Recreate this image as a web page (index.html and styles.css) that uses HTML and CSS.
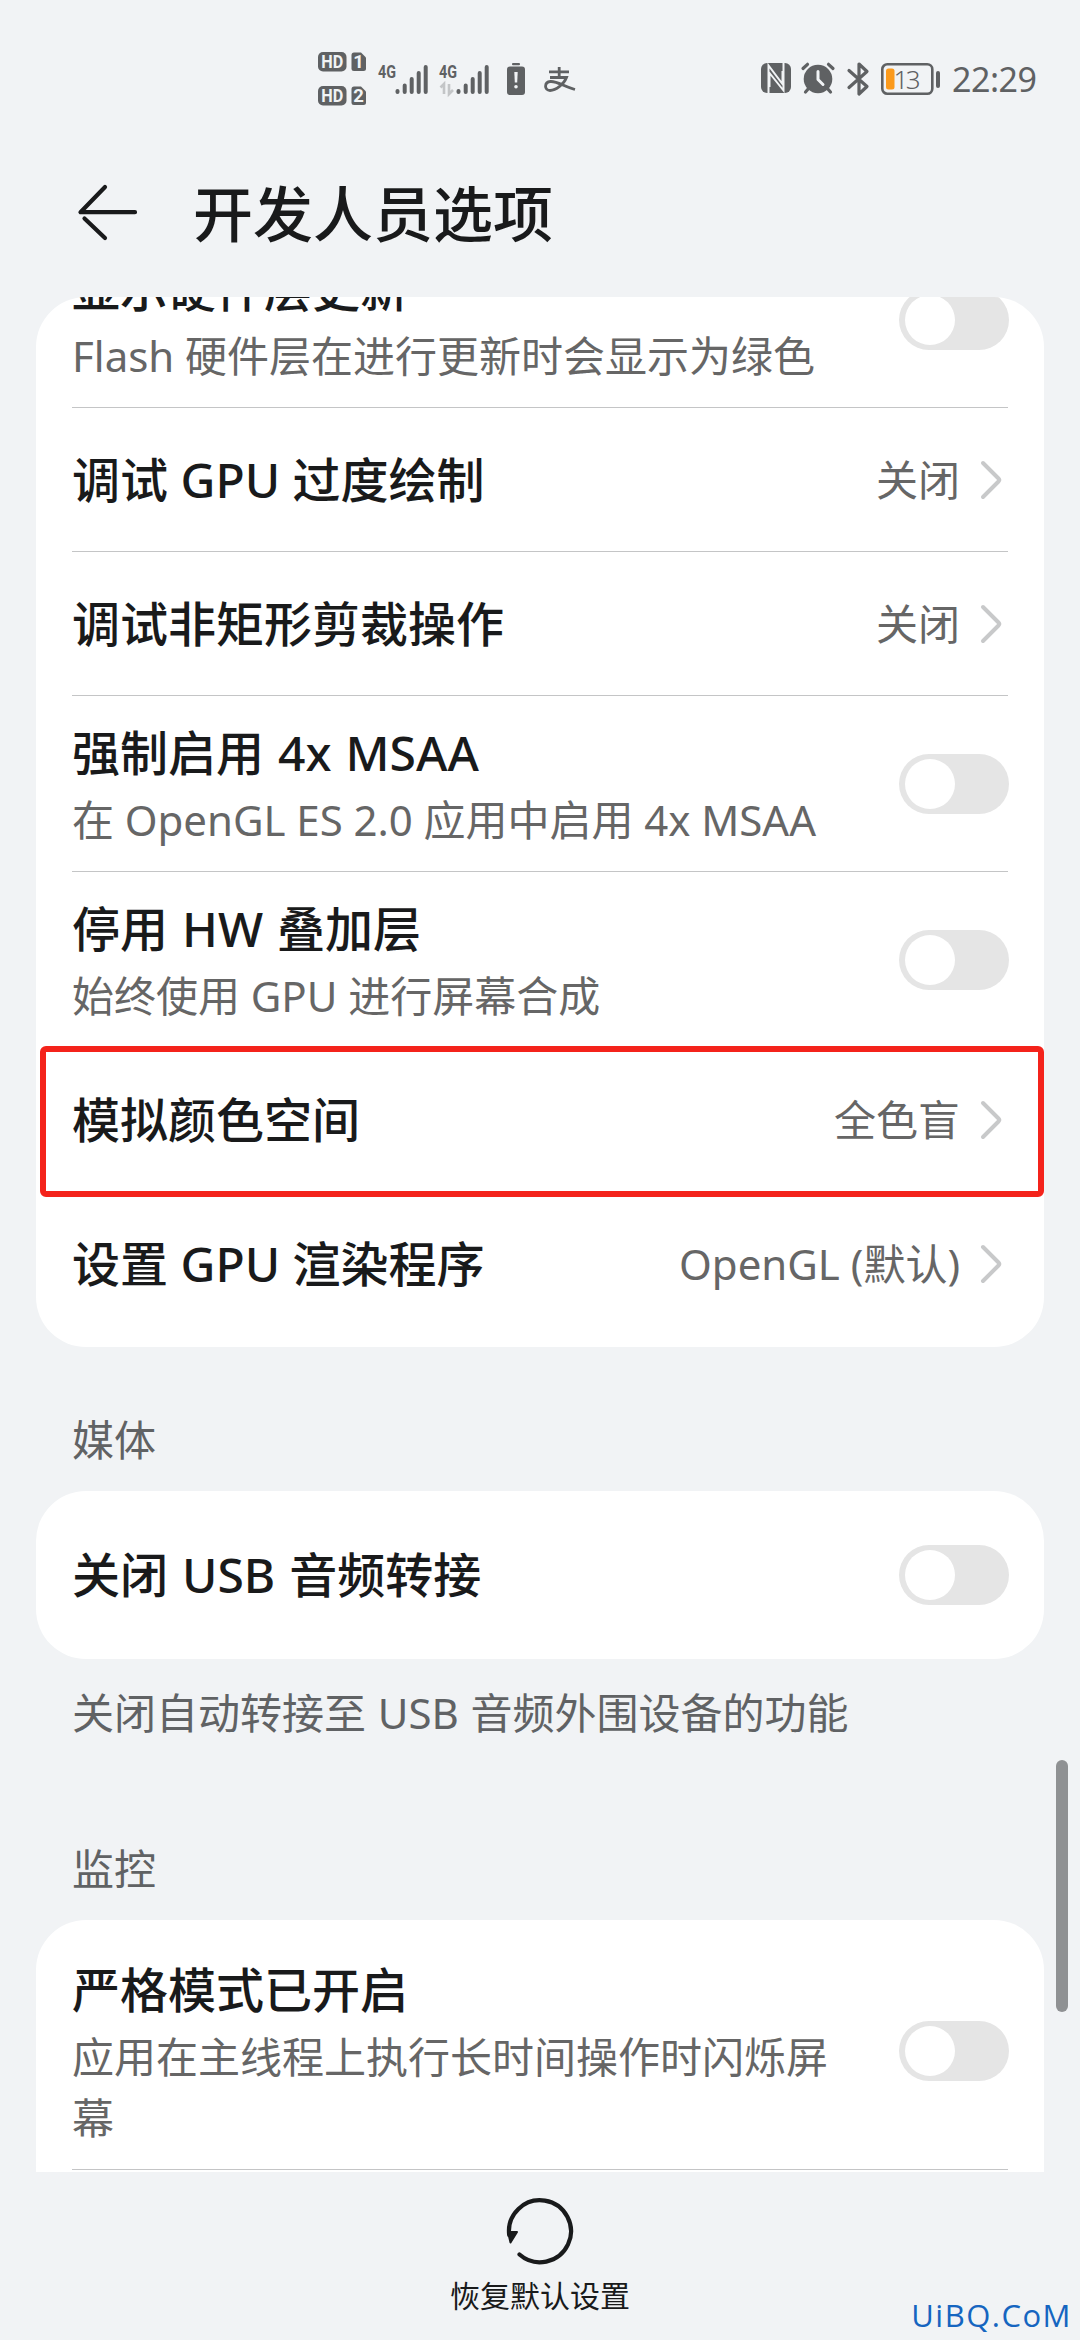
FILE: index.html
```html
<!DOCTYPE html>
<html lang="zh-CN">
<head>
<meta charset="utf-8">
<title>开发人员选项</title>
<link rel="stylesheet" href="styles.css">
</head>
<body>
<div class="screen">
  <header class="status">
    <div class="status-left">
      <svg class="sims" width="50" height="54" viewBox="0 0 50 54">
        <g class="solid">
          <rect x="0" y="0" width="28.500" height="19.500" rx="5"/>
          <path d="M36 .5H43L48 5.500V16.500Q48 19 45.500 19H36Q33.500 19 33.500 16.500V3Q33.500.5 36 .5Z"/>
          <rect x="0" y="34" width="28.500" height="19.500" rx="5"/>
          <path d="M36 34.500H43L48 39.500V50.500Q48 53 45.500 53H36Q33.500 53 33.500 50.500V37Q33.500 34.500 36 34.500Z"/>
        </g>
        <g class="badge-text">
          <text x="14.200" y="16.300" textLength="22" lengthAdjust="spacingAndGlyphs">HD</text>
          <text x="40.500" y="16.300">1</text>
          <text x="14.200" y="50.300" textLength="22" lengthAdjust="spacingAndGlyphs">HD</text>
          <text x="40.500" y="50.300">2</text>
        </g>
      </svg>
      <svg class="signal" width="51" height="32" viewBox="0 0 51 32">
        <text class="net" x="0" y="14.500" textLength="18" lengthAdjust="spacingAndGlyphs">4G</text>
        <path class="bars" d="M19.500 28V29M26.700 22.500V29M33.700 16V29M40.700 10V29M47.700 4V29"/>
      </svg>
      <svg class="signal" width="51" height="32" viewBox="0 0 51 32">
        <text class="net" x="0" y="14.500" textLength="18" lengthAdjust="spacingAndGlyphs">4G</text>
        <path class="data" d="M1.500 24.500L5 21V31M10 21V31L14 27"/>
        <path class="bars" d="M19.500 28V29M26.700 22.500V29M33.700 16V29M40.700 10V29M47.700 4V29"/>
      </svg>
      <svg class="warn" width="18" height="32" viewBox="0 0 18 32">
        <rect class="solid" x="5" y="0" width="8" height="2.200" rx="1"/>
        <rect class="solid" x="0" y="3.500" width="18" height="28.500" rx="3"/>
        <path class="cut" d="M7.300 9H10.700L10.200 19.500H7.800Z"/>
        <circle class="cut" cx="9" cy="23.700" r="1.800"/>
      </svg>
      <svg class="pay" width="32" height="26" viewBox="0 0 32 26">
        <path class="pay-line" d="M5 4.800H25M15.200 0V10.500M6 10.500H22.500C20 17 12 23.500 6 23.500C0 23.500 0 15 6.500 14.500C13 14 20 19.500 31 22.500"/>
      </svg>
    </div>
    <div class="status-right">
      <svg class="nfc" width="30" height="30" viewBox="0 0 30 30">
        <rect class="solid" width="30" height="30" rx="6"/>
        <path class="cut-line" d="M7.500 30V2.500L21.500 21V8M22.500 0V27.500L8.500 10V24"/>
      </svg>
      <svg class="alarm" width="34" height="32" viewBox="0 0 34 32">
        <circle class="solid" cx="17" cy="17" r="14.300"/>
        <path class="line" d="M2 6.500L6.500 2.300M32 6.500L27.500 2.300M4.500 30L8 26M29.500 30L26 26"/>
        <path class="cut-stroke" d="M17 9.500V17.500L22 22.500"/>
      </svg>
      <svg class="bt" width="22" height="34" viewBox="0 0 22 34">
        <path class="line" d="M2 8.500L20 24.500L12 32V2L20 9.500L2 25.500"/>
      </svg>
      <svg class="battery" width="60" height="32" viewBox="0 0 60 32">
        <rect class="shell" x="1.300" y="1.300" width="50" height="29.400" rx="5"/>
        <rect class="level" x="5" y="5.500" width="8.500" height="21" rx="2.500"/>
        <rect class="solid" x="55" y="8" width="4" height="17" rx="2"/>
        <text class="percent" x="12.500" y="25.500" textLength="27">13</text>
      </svg>
      <span class="clock">22:29</span>
    </div>
  </header>

  <div class="titlebar">
    <svg class="back" width="62" height="58" viewBox="0 0 62 58">
      <path d="M29 4L4.500 29.200H59M8.500 35.500L29 55"/>
    </svg>
    <h1>开发人员选项</h1>
  </div>

  <main class="content">
    <section class="card card-scrolled">
      <div class="row tall">
        <div class="text"><div class="name">显示硬件层更新</div><div class="desc">Flash 硬件层在进行更新时会显示为绿色</div></div>
        <span class="toggle"></span>
      </div>
      <div class="row">
        <div class="name">调试 GPU 过度绘制</div>
        <div class="value">关闭</div><svg class="chev" viewBox="0 0 24 42"><path d="M4 4L19.500 19.500Q21 21 19.500 22.500L4 38"/></svg>
      </div>
      <div class="row">
        <div class="name">调试非矩形剪裁操作</div>
        <div class="value">关闭</div><svg class="chev" viewBox="0 0 24 42"><path d="M4 4L19.500 19.500Q21 21 19.500 22.500L4 38"/></svg>
      </div>
      <div class="row tall">
        <div class="text"><div class="name spaced">强制启用 4x MSAA</div><div class="desc">在 OpenGL ES 2.0 应用中启用 4x MSAA</div></div>
        <span class="toggle"></span>
      </div>
      <div class="row tall">
        <div class="text"><div class="name spaced">停用 HW 叠加层</div><div class="desc">始终使用 GPU 进行屏幕合成</div></div>
        <span class="toggle"></span>
      </div>
      <div class="row marked">
        <div class="name">模拟颜色空间</div>
        <div class="value">全色盲</div><svg class="chev" viewBox="0 0 24 42"><path d="M4 4L19.500 19.500Q21 21 19.500 22.500L4 38"/></svg>
      </div>
      <div class="row last">
        <div class="name">设置 GPU 渲染程序</div>
        <div class="value">OpenGL (默认)</div><svg class="chev" viewBox="0 0 24 42"><path d="M4 4L19.500 19.500Q21 21 19.500 22.500L4 38"/></svg>
      </div>
    </section>

    <h2 class="section media">媒体</h2>
    <section class="card single">
      <div class="row last">
        <div class="name spaced">关闭 USB 音频转接</div>
        <span class="toggle"></span>
      </div>
    </section>
    <p class="note">关闭自动转接至 USB 音频外围设备的功能</p>

    <h2 class="section monitor">监控</h2>
    <section class="card open">
      <div class="row wrap">
        <div class="text"><div class="name">严格模式已开启</div><div class="desc">应用在主线程上执行长时间操作时闪烁屏幕</div></div>
        <span class="toggle"></span>
      </div>
    </section>
    <div class="scrollbar"></div>
  </main>

  <footer class="footer">
    <svg width="68" height="68" viewBox="0 0 68 68">
      <path class="ring" d="M13.500 56.500A31 31 0 1 0 3.200 37"/>
      <path class="tip" d="M2 34H11L4.500 44.500Z"/>
    </svg>
    <span class="reset">恢复默认设置</span>
    <span class="watermark">UiBQ.CoM</span>
  </footer>
</div>
</body>
</html>
```
FILE: styles.css
```css
*, *::before, *::after { box-sizing: border-box; margin: 0; padding: 0; }

body {
  background: #f1f3f5;
  color: #191a1b;
  font-family: "Noto Sans", "Noto Sans CJK SC", sans-serif;
}

svg { display: block; flex: none; overflow: visible; }

.screen {
  width: 1080px;
  height: 2340px;
  overflow: hidden;
  display: flex;
  flex-direction: column;
}

/* Status bar */
.status {
  height: 130px;
  padding: 52px 43px 0 318px;
  display: flex;
  justify-content: space-between;
}
.status-left, .status-right { display: flex; align-items: flex-start; }
.signal { margin: 11px 0 0 9.500px; }
.signal + .signal { margin-left: 10px; }
.warn { margin: 11px 0 0 17px; }
.pay { margin: 15px 0 0 19px; }
.nfc { margin-top: 11px; }
.alarm { margin: 10px 0 0 10.500px; }
.bt { margin: 9.500px 0 0 12px; }
.battery { margin: 10.500px 0 0 12px; }
.solid { fill: #5f6163; }
.cut { fill: #f1f3f5; }
.badge-text { fill: #f1f3f5; font: 700 18.500px Roboto, sans-serif; text-anchor: middle; }
.net { fill: #5f6163; font: 700 19px Roboto, sans-serif; }
.bars { fill: none; stroke: #5f6163; stroke-width: 4; stroke-linecap: round; }
.data { fill: none; stroke: #c3c5c7; stroke-width: 2.600; }
.pay-line { fill: none; stroke: #5f6163; stroke-width: 2.800; }
.cut-line { fill: none; stroke: #f1f3f5; stroke-width: 2; }
.cut-stroke { fill: none; stroke: #f1f3f5; stroke-width: 3; stroke-linecap: round; stroke-linejoin: round; }
.line { fill: none; stroke: #5f6163; stroke-width: 3.200; stroke-linecap: round; stroke-linejoin: round; }
.shell { fill: none; stroke: #5f6163; stroke-width: 2.600; }
.level { fill: #fb9a1c; }
.percent { fill: #5f6163; font: 360 26px "Noto Sans", sans-serif; }
.clock {
  width: 85px;
  margin: 3px 0 0 11px;
  color: #5f6163;
  font-size: 34px;
  font-weight: 370;
  line-height: 48px;
  letter-spacing: -0.500px;
  white-space: nowrap;
}

/* Title bar */
.titlebar {
  height: 167px;
  padding: 53px 0 0 76px;
  display: flex;
}
.back { fill: none; stroke: #191a1b; stroke-width: 4.200; stroke-linecap: round; stroke-linejoin: round; }
h1 { margin-left: 55px; font-size: 60px; font-weight: 500; line-height: 62px; }

/* List */
.content {
  position: relative;
  height: 1875px;
  padding: 0 36px;
  overflow: hidden;
}
.card { background: #fff; border-radius: 50px; overflow: hidden; }
.card-scrolled { height: 1050px; }
.card-scrolled > .row:first-child { margin-top: -65px; }
.single { height: 168px; padding-top: 12px; }
.open { height: 252px; padding-top: 12px; border-radius: 50px 50px 0 0; }

.row {
  position: relative;
  height: 144px;
  margin: 0 36px;
  border-bottom: 1px solid #c4c5c6;
  display: flex;
  align-items: center;
}
.tall { height: 176px; }
.wrap { height: 238px; }
.last { border-bottom-color: transparent; }
.text { flex: 1; padding: 5px 60px 0 0; }
.name { flex: 1; font-size: 48px; font-weight: 500; line-height: 64px; white-space: nowrap; }
.spaced { word-spacing: 1.500px; }
.desc { margin-top: 5px; color: #666; font-size: 42px; line-height: 60.500px; word-spacing: -0.200px; }
.value { color: #666; font-size: 42px; line-height: 60px; }
.chev {
  width: 24px;
  height: 42px;
  margin: 0 5px 0 19px;
  fill: none;
  stroke: #c8c9ca;
  stroke-width: 4;
  stroke-linecap: round;
}
.toggle {
  flex: none;
  width: 110px;
  height: 60px;
  margin-right: -1px;
  padding: 5px 6px;
  border-radius: 30px;
  background: #e5e5e5;
}
.toggle::before {
  content: "";
  display: block;
  width: 50px;
  height: 50px;
  border-radius: 50%;
  background: #fff;
}

/* Annotation frame around the highlighted row */
.marked::after {
  content: "";
  position: absolute;
  top: -2px;
  left: -32px;
  right: -36px;
  height: 151px;
  z-index: 1;
  border: 6px solid #f4231b;
  border-radius: 6px;
}

.section { padding-left: 36px; color: #606264; font-size: 42px; font-weight: 400; line-height: 60px; }
.media { height: 144px; padding-top: 63px; }
.note { height: 149px; padding: 24px 0 0 36px; color: #606264; font-size: 42px; line-height: 60px; word-spacing: 0.800px; }
.monitor { height: 112px; padding-top: 31px; }

.scrollbar {
  position: absolute;
  top: 1463px;
  right: 12px;
  width: 12px;
  height: 252px;
  border-radius: 6px;
  background: #8f9193;
}

/* Bottom action */
.footer {
  position: relative;
  height: 168px;
  padding-top: 26px;
  display: flex;
  flex-direction: column;
  align-items: center;
}
.ring { fill: none; stroke: #191a1b; stroke-width: 4.200; stroke-linecap: round; }
.tip { fill: #191a1b; stroke: #191a1b; stroke-width: 2; stroke-linejoin: round; }
.reset { margin-top: 8px; font-size: 30px; line-height: 44px; }
.watermark {
  position: absolute;
  right: 8px;
  bottom: 3px;
  color: #1565c0;
  font: 500 31px/44px "Open Sans", sans-serif;
  letter-spacing: 1.500px;
}
```
